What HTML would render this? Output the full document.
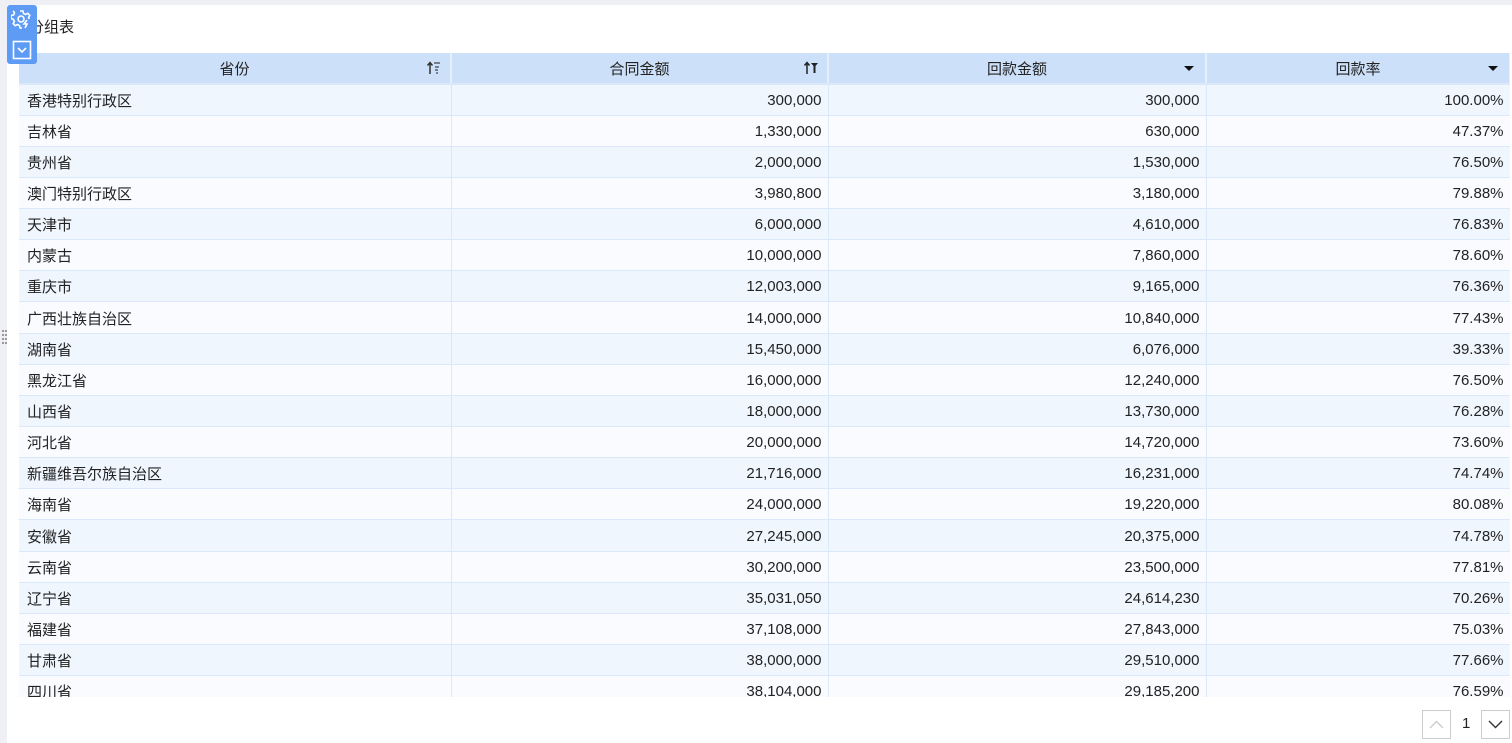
<!DOCTYPE html>
<html><head><meta charset="utf-8"><style>
*{margin:0;padding:0;box-sizing:border-box}
body{width:1512px;height:743px;background:#eef0f5;font-family:"Liberation Sans","Noto Sans CJK SC",sans-serif;font-size:15px;color:#222;position:relative;overflow:hidden}
.panel{position:absolute;left:7px;top:5px;right:0;bottom:0;background:#fff}
.title{position:absolute;left:29px;top:16px;font-size:15px}
.tool{position:absolute;left:7px;top:5px;width:30px;height:59px;background:#5d9bf4;border-radius:3px}
.wrap{position:absolute;left:19px;top:53px;width:1491px;height:644px;overflow:hidden}
table{border-collapse:collapse;table-layout:fixed;width:1491px}
th{background:#cce0f9;height:31px;font-weight:normal;border-right:2px solid #e6effb;position:relative;border-bottom:2px solid #dbe8f9}
td{height:31.15px;border-right:1px solid #dbe8f9;border-bottom:1px solid #dbe8f9;text-align:right;padding:1px 6px 0;white-space:nowrap}
td:first-child{text-align:left;padding-left:8px}
tr:nth-child(odd) td{background:#f0f6fe}
tr:nth-child(even) td{background:#f9fbfe}
.ic{position:absolute;right:8px;top:7px}
.pg{position:absolute;top:710px;width:29px;height:29px;border:1px solid #ccc;background:#fff}
</style></head><body>
<div class="panel"></div>
<div class="title">分组表</div>
<div class="wrap"><table>
<colgroup><col style="width:432px"><col style="width:377px"><col style="width:378px"><col style="width:304px"></colgroup>
<thead><tr>
<th>省份<svg class="ic" width="16" height="16" viewBox="0 0 16 16"><path d="M4 14V3M1.5 5.5L4 2.5 6.5 5.5" stroke="#333" stroke-width="1.5" fill="none"/><path d="M8 3h6M9 7h4M9 10h3M10 13h2" stroke="#444" stroke-width="1.2"/></svg></th>
<th>合同金额<svg class="ic" width="16" height="16" viewBox="0 0 16 16"><path d="M4 14V3M1.5 5.5L4 2.5 6.5 5.5" stroke="#222" stroke-width="1.5" fill="none"/><path d="M8 3h7l-2.5 3v7h-2V6z" fill="#222"/></svg></th>
<th>回款金额<svg class="ic" width="12" height="16" viewBox="0 0 12 16" style="right:10px"><path d="M1 6h10l-5 5z" fill="#111"/></svg></th>
<th>回款率<svg class="ic" width="12" height="16" viewBox="0 0 12 16" style="right:10px"><path d="M1 6h10l-5 5z" fill="#111"/></svg></th>
</tr></thead>
<tbody>
<tr><td>香港特别行政区</td><td>300,000</td><td>300,000</td><td>100.00%</td></tr>
<tr><td>吉林省</td><td>1,330,000</td><td>630,000</td><td>47.37%</td></tr>
<tr><td>贵州省</td><td>2,000,000</td><td>1,530,000</td><td>76.50%</td></tr>
<tr><td>澳门特别行政区</td><td>3,980,800</td><td>3,180,000</td><td>79.88%</td></tr>
<tr><td>天津市</td><td>6,000,000</td><td>4,610,000</td><td>76.83%</td></tr>
<tr><td>内蒙古</td><td>10,000,000</td><td>7,860,000</td><td>78.60%</td></tr>
<tr><td>重庆市</td><td>12,003,000</td><td>9,165,000</td><td>76.36%</td></tr>
<tr><td>广西壮族自治区</td><td>14,000,000</td><td>10,840,000</td><td>77.43%</td></tr>
<tr><td>湖南省</td><td>15,450,000</td><td>6,076,000</td><td>39.33%</td></tr>
<tr><td>黑龙江省</td><td>16,000,000</td><td>12,240,000</td><td>76.50%</td></tr>
<tr><td>山西省</td><td>18,000,000</td><td>13,730,000</td><td>76.28%</td></tr>
<tr><td>河北省</td><td>20,000,000</td><td>14,720,000</td><td>73.60%</td></tr>
<tr><td>新疆维吾尔族自治区</td><td>21,716,000</td><td>16,231,000</td><td>74.74%</td></tr>
<tr><td>海南省</td><td>24,000,000</td><td>19,220,000</td><td>80.08%</td></tr>
<tr><td>安徽省</td><td>27,245,000</td><td>20,375,000</td><td>74.78%</td></tr>
<tr><td>云南省</td><td>30,200,000</td><td>23,500,000</td><td>77.81%</td></tr>
<tr><td>辽宁省</td><td>35,031,050</td><td>24,614,230</td><td>70.26%</td></tr>
<tr><td>福建省</td><td>37,108,000</td><td>27,843,000</td><td>75.03%</td></tr>
<tr><td>甘肃省</td><td>38,000,000</td><td>29,510,000</td><td>77.66%</td></tr>
<tr><td>四川省</td><td>38,104,000</td><td>29,185,200</td><td>76.59%</td></tr>
</tbody></table></div>
<div class="tool">
<svg style="position:absolute;left:4px;top:4px" width="22" height="22" viewBox="0 0 22 22" fill="none" stroke="#fff" stroke-width="1.6"><path d="M9 2h3l.5 2.5 2 1 2.3-1.2 2 2-1.2 2.3.6 1.4M11 19H9l-.5-2.5-2-1-2.3 1.2-2-2 1.2-2.3-1-2L0 9.5v-3l2.5-.5 1-2L2.3 1.7"/><circle cx="10" cy="10" r="3"/><path d="M16 11l-3 4h3l-2 4"/></svg>
<svg style="position:absolute;left:5px;top:35px" width="20" height="20" viewBox="0 0 20 20" fill="none" stroke="#fff" stroke-width="1.6"><rect x="1.5" y="1.5" width="17" height="17"/><path d="M6 8l4 4 4-4"/></svg>
</div>
<svg style="position:absolute;left:2px;top:330px" width="6" height="14"><g fill="#999"><rect x="0" y="0" width="2" height="2"/><rect x="3" y="0" width="2" height="2"/><rect x="0" y="4" width="2" height="2"/><rect x="3" y="4" width="2" height="2"/><rect x="0" y="8" width="2" height="2"/><rect x="3" y="8" width="2" height="2"/><rect x="0" y="12" width="2" height="2"/><rect x="3" y="12" width="2" height="2"/></g></svg>
<div class="pg" style="left:1422px"><svg width="27" height="27" viewBox="0 0 27 27"><path d="M7 17l6.5-6.5L20 17" stroke="#ccc" stroke-width="1.4" fill="none"/></svg></div>
<div style="position:absolute;left:1462px;top:715px;font-size:15px">1</div>
<div class="pg" style="left:1481px"><svg width="27" height="27" viewBox="0 0 27 27"><path d="M7 10l6.5 6.5L20 10" stroke="#333" stroke-width="1.4" fill="none"/></svg></div>
</body></html>
